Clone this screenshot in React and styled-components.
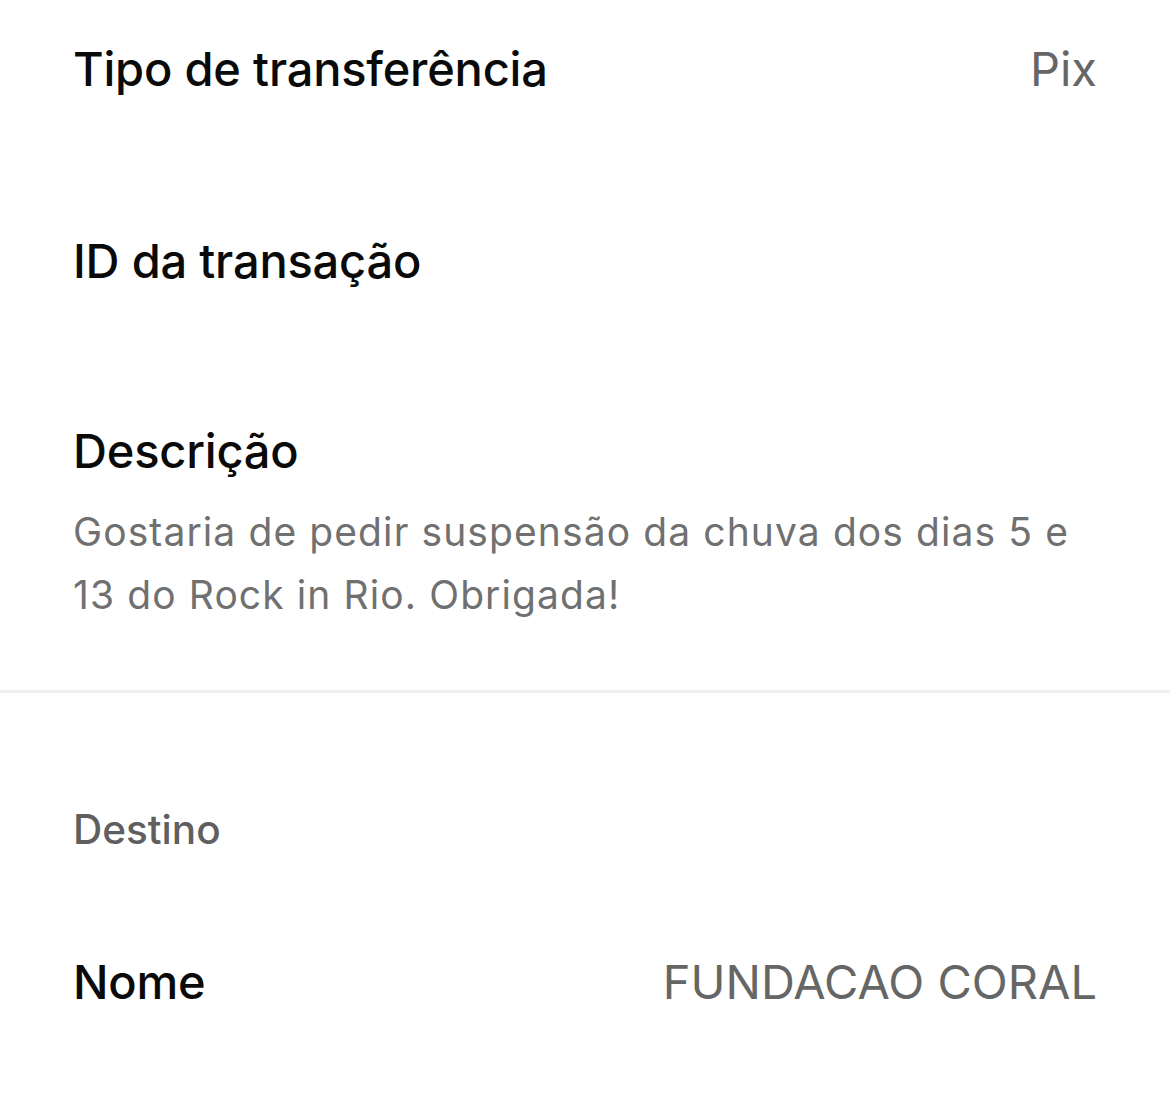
import React from "react";
import styled, { createGlobalStyle } from "styled-components";

const Global = createGlobalStyle`
  html, body { margin: 0; padding: 0; background: #fff; }
  body { font-family: Inter, "Noto Sans", sans-serif; -webkit-font-smoothing: antialiased; }
`;

const Page = styled.div`
  width: 1170px;
  height: 1106px;
  background: #fff;
  overflow: hidden;
  display: flex;
  flex-direction: column;
`;

const Section = styled.div`
  padding: 0 73px;
  display: flex;
  flex-direction: column;
`;

const Row = styled.div`
  display: flex;
  justify-content: space-between;
  align-items: center;
  height: ${(p) => p.$h}px;
`;

const Label = styled.div`
  font-size: 47px;
  line-height: 60px;
  font-weight: 500;
  color: #0a0a0a;
  letter-spacing: -0.2px;
`;

const Value = styled.div`
  font-size: 47px;
  line-height: 60px;
  font-weight: 400;
  color: #666;
`;

const Block = styled.div`
  display: flex;
  flex-direction: column;
  padding-top: ${(p) => p.$top}px;
  padding-bottom: ${(p) => p.$bottom}px;
`;

const Desc = styled.p`
  margin: 19px 0 0;
  font-size: 39px;
  line-height: 63px;
  letter-spacing: 1.1px;
  color: #707070;
  font-weight: 400;
`;

const Divider = styled.hr`
  border: 0;
  height: 3px;
  background: #efefef;
  margin: 0;
  width: 100%;
`;

const SectionTitle = styled.div`
  font-size: 40.5px;
  line-height: 60px;
  font-weight: 500;
  color: #5f5f5f;
`;

export default function App() {
  return (
    <Page>
      <Global />
      <Section>
        <Row $h={138}>
          <Label>Tipo de transferência</Label>
          <Value>Pix</Value>
        </Row>
        <Row $h={246}>
          <Label>ID da transação</Label>
        </Row>
        <Block $top={37} $bottom={64}>
          <Label>Descrição</Label>
          <Desc>
            Gostaria de pedir suspensão da chuva dos dias 5 e 13 do Rock in Rio. Obrigada!
          </Desc>
        </Block>
      </Section>
      <Divider />
      <Section>
        <Block $top={107} $bottom={92}>
          <SectionTitle>Destino</SectionTitle>
        </Block>
        <Row $h={60}>
          <Label>Nome</Label>
          <Value>FUNDACAO CORAL</Value>
        </Row>
      </Section>
    </Page>
  );
}
